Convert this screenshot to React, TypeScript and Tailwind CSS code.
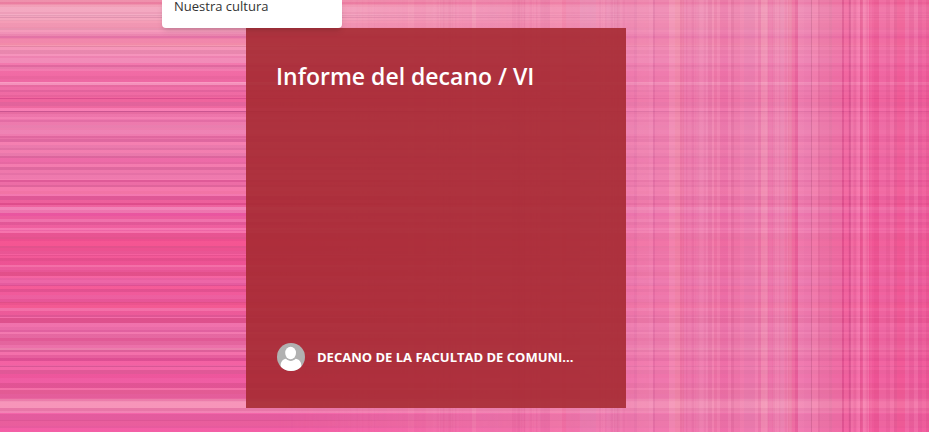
import React from 'react';

type Stripe = [number, string];

// Each stripe runs from its start to the start of the next one
const ROWS: Stripe[] = [
  [0, '#ee8ba8'], [2, '#e87096'], [4, '#ee8ca8'], [5, '#f3a4ba'], [7, '#f6b2c8'], [12, '#eda2bc'],
  [14, '#f8b8ce'], [15, '#e0a0b8'], [16, '#f6acc4'], [17, '#d890ac'], [18, '#f8b0c4'], [20, '#eca0b6'],
  [21, '#f8a2b8'], [23, '#f298b2'], [27, '#ee90ac'], [28, '#e694b0'], [30, '#f8a0c0'], [32, '#f292ba'],
  [34, '#ea80ae'], [36, '#dd64a0'], [38, '#ee76a4'], [39, '#f383a8'], [43, '#f48aa4'], [45, '#f9a0b4'],
  [46, '#de829e'], [47, '#fa9cbe'], [50, '#e688ae'], [54, '#fa9cc4'], [56, '#ee84b4'], [58, '#f494c0'],
  [63, '#f678b0'], [65, '#d8609a'], [67, '#e87aac'], [69, '#f67eb4'], [71, '#f368a4'], [76, '#e8629c'],
  [79, '#ee66a2'], [82, '#ffb4d2'], [83, '#f8a4c8'], [85, '#e4689e'], [87, '#f070a8'], [90, '#dd5c98'],
  [92, '#f068a2'], [95, '#e45c96'], [97, '#f4609c'], [98, '#d03c80'], [99, '#f05e98'], [102, '#dd5c96'],
  [106, '#ee649c'], [108, '#ff84ba'], [111, '#b84684'], [112, '#e4689e'], [114, '#ee76ac'], [117, '#f886b8'],
  [119, '#ee78ae'], [120, '#de6aa2'], [122, '#ee7eb0'], [125, '#e884b2'], [128, '#ee84b2'], [130, '#f08aba'],
  [134, '#f07eb2'], [136, '#da609a'], [138, '#e870a6'], [139, '#d8609a'], [142, '#fa84b4'], [145, '#ea7cae'],
  [148, '#de6ea2'], [150, '#f682b2'], [153, '#e87aac'], [156, '#d45c96'], [158, '#ee66a6'], [162, '#e4629e'],
  [164, '#f880b2'], [167, '#d8649a'], [170, '#f07cae'], [173, '#e272a6'], [175, '#f080b2'], [179, '#f888b8'],
  [180, '#d85090'], [182, '#ee6ca6'], [185, '#d86096'], [187, '#fa80b0'], [191, '#f57aa6'], [194, '#f880b6'],
  [196, '#d85090'], [200, '#ee5c98'], [203, '#d84080'], [205, '#f0629e'], [207, '#f694c4'], [210, '#ee80b6'],
  [213, '#e850a0'], [216, '#ec5c9e'], [219, '#f27ab2'], [222, '#dd5494'], [225, '#f060a0'], [228, '#fc86bc'],
  [230, '#ee6cac'], [231, '#fc80b6'], [233, '#e6508e'], [237, '#de5088'], [239, '#ee4a8a'], [241, '#fa5490'],
  [246, '#de5088'], [248, '#ec508e'], [251, '#e85694'], [254, '#fa66a4'], [255, '#e4508e'], [256, '#f65c9a'],
  [258, '#e04c8a'], [261, '#ee5294'], [265, '#f87cb2'], [267, '#ec60a0'], [270, '#e65696'], [272, '#de4c84'],
  [276, '#fa6ca8'], [278, '#ea64a6'], [280, '#ee6eb0'], [283, '#e25ea4'], [285, '#d84c90'], [286, '#fa5c98'],
  [289, '#de4c8c'], [292, '#f45a9c'], [295, '#ee62a4'], [299, '#e65296'], [302, '#dc487e'], [303, '#ee4e88'],
  [305, '#f8588e'], [308, '#f878ae'], [311, '#ee5898'], [315, '#d85090'], [317, '#fa72b0'], [318, '#d84884'],
  [323, '#f47ab4'], [327, '#ea70ac'], [330, '#dd60a0'], [332, '#f884b8'], [334, '#e46aa2'], [338, '#dd5490'],
  [341, '#e2649c'], [345, '#ee76ae'], [348, '#ee8cb4'], [350, '#d85c96'], [352, '#fa76b0'], [355, '#e65c9c'],
  [358, '#d8448c'], [361, '#fa60a4'], [365, '#f064a6'], [366, '#d05090'], [367, '#fa68aa'], [370, '#dd5292'],
  [374, '#f0509a'], [378, '#f45aa4'], [383, '#de4c8e'], [388, '#fa76ac'], [390, '#e0588e'], [394, '#e25c98'],
  [398, '#e868a0'], [399, '#ee8cb0'], [401, '#f8aac2'], [402, '#ffb2c8'], [408, '#e884ac'], [411, '#f896c0'],
  [413, '#fa6ab0'], [414, '#e25a9e'], [420, '#d85290'], [421, '#ea5e9c'], [426, '#e65a9e'], [428, '#fa60aa'],
];

const COLUMNS: Stripe[] = [
  [250, '#ee70a8'], [340, '#f27cac'], [408, '#f892b4'], [414, '#ee78a8'], [426, '#f288b0'], [440, '#e878a4'],
  [454, '#f07cac'], [472, '#f6a0bc'], [476, '#f082b0'], [490, '#e684b0'], [500, '#f07eaa'], [512, '#e66c9e'],
  [525, '#f27caa'], [540, '#e472a4'], [550, '#f68aae'], [562, '#f4749e'], [566, '#ee80ac'], [580, '#e692bc'],
  [596, '#f090b8'], [606, '#e88ab6'], [614, '#e080ac'], [620, '#ee84b2'], [634, '#e27cac'], [637, '#f08cb4'],
  [649, '#f494bc'], [653, '#d86ea2'], [655, '#ee84b2'], [669, '#f4a0bc'], [675, '#f29cac'], [680, '#e8769e'],
  [684, '#ea7cac'], [698, '#ee90b8'], [708, '#e27aa6'], [712, '#f494b8'], [714, '#e878a4'], [717, '#f28cb4'],
  [720, '#ea6ea6'], [728, '#f286b4'], [731, '#dc6a9c'], [734, '#ec7cac'], [740, '#f08ab4'], [744, '#e484b2'],
  [755, '#f294bc'], [758, '#e67aa8'], [761, '#f4a2bc'], [768, '#ea76aa'], [773, '#f090b8'], [780, '#e692b8'],
  [784, '#f090b6'], [788, '#e882a2'], [792, '#f06a9e'], [795, '#e0508e'], [798, '#f08aba'], [804, '#ea84b6'],
  [811, '#c0648e'], [812, '#f28ab4'], [818, '#dc709e'], [820, '#e87aaa'], [829, '#dc74a0'], [832, '#ec72a6'],
  [842, '#d04080'], [844, '#f464a0'], [849, '#c84080'], [851, '#f070a4'], [857, '#fa80b4'], [860, '#e2508c'],
  [863, '#f886b4'], [867, '#f878ac'], [869, '#ee5494'], [874, '#e84e8c'], [879, '#f06ca6'], [886, '#e6609a'],
  [890, '#f472a8'], [894, '#e0568e'], [897, '#f05692'], [905, '#f070a8'], [909, '#e65c98'], [914, '#f278ac'],
  [918, '#e65496'], [922, '#f0609c'], [926, '#e6508e'],
];

const Backdrop: React.FC = () => (
  <svg
    className="absolute inset-0 h-full w-full"
    viewBox="0 0 929 432"
    preserveAspectRatio="none"
    aria-hidden="true"
  >
    <defs>
      <linearGradient id="fade" x1="0" x2="1" y1="0" y2="0">
        <stop offset="0.3" stopColor="#fff" stopOpacity="0" />
        <stop offset="0.5" stopColor="#fff" stopOpacity="0.5" />
        <stop offset="0.7" stopColor="#fff" stopOpacity="0.85" />
        <stop offset="0.95" stopColor="#fff" stopOpacity="0.95" />
      </linearGradient>
      <linearGradient id="rows-tone" x1="0" x2="0" y1="0" y2="1">
        <stop offset="0" stopColor="#f09ab4" />
        <stop offset="0.1" stopColor="#ee8eb2" />
        <stop offset="0.18" stopColor="#ee6ca4" />
        <stop offset="0.35" stopColor="#ec78ac" />
        <stop offset="0.5" stopColor="#ec60a0" />
        <stop offset="0.6" stopColor="#ec5292" />
        <stop offset="0.8" stopColor="#e866a2" />
        <stop offset="1" stopColor="#e85c9e" />
      </linearGradient>
      <linearGradient id="columns-tone" x1="0" x2="1" y1="0" y2="0">
        <stop offset="0.4" stopColor="#f080ac" />
        <stop offset="0.68" stopColor="#ec84b2" />
        <stop offset="0.86" stopColor="#ec82ae" />
        <stop offset="0.94" stopColor="#ee5e9a" />
        <stop offset="1" stopColor="#ec5c9a" />
      </linearGradient>
      <mask id="columns-mask">
        <rect width="929" height="432" fill="url(#fade)" />
      </mask>
    </defs>
    {ROWS.map(([y, color], i) => (
      <rect key={y} y={y} width="929" height={(ROWS[i + 1]?.[0] ?? 432) - y} fill={color} />
    ))}
    <rect width="929" height="432" fill="url(#rows-tone)" opacity="0.35" />
    <g mask="url(#columns-mask)">
      {COLUMNS.map(([x, color], i) => (
        <rect key={x} x={x} width={(COLUMNS[i + 1]?.[0] ?? 929) - x} height="432" fill={color} />
      ))}
      {/* Fine threads over the wide columns */}
      {Array.from({ length: 90 }, (_, i) => (
        <rect
          key={i}
          x={350 + ((i * 83) % 579)}
          width={1 + (i % 2)}
          height="432"
          fill={i % 3 ? '#ffc4dc' : '#b83c78'}
          opacity="0.12"
        />
      ))}
      <rect width="929" height="432" fill="url(#columns-tone)" opacity="0.35" />
    </g>
    {/* The rows show through the columns as a faint weave */}
    <g mask="url(#columns-mask)" opacity="0.22">
      {ROWS.map(([y, color], i) => (
        <rect key={y} y={y} width="929" height={(ROWS[i + 1]?.[0] ?? 432) - y} fill={color} />
      ))}
    </g>
  </svg>
);

const Avatar: React.FC = () => (
  <svg className="size-[30px] shrink-0 p-px" viewBox="0 0 28 28" aria-hidden="true">
    <defs>
      <clipPath id="avatar-clip">
        <circle cx="14" cy="14" r="14" />
      </clipPath>
    </defs>
    <g clipPath="url(#avatar-clip)">
      <rect width="28" height="28" fill="#b1b1b1" />
      <path
        fill="#fff"
        d="M3.600 25.500V23c0-4.200 2.200-6.800 5.400-7.200 1.400 1.400 3 2.100 4.800 2.100s3.400-.7 4.800-2.100c3.400.4 5.800 3 5.800 7.200v2.500L21 28H7z"
      />
      <ellipse cx="13.600" cy="10.200" rx="6.100" ry="7" fill="#b1b1b1" />
      <ellipse cx="13.600" cy="10" rx="5.400" ry="6.200" fill="#fff" />
    </g>
  </svg>
);

const App: React.FC = () => {
  return (
    <div className="relative min-h-screen overflow-hidden bg-[#ee6ca6] font-['Open_Sans','Noto_Sans',sans-serif]">
      <Backdrop />

      {/* Open submenu hanging from the top bar */}
      <nav className="absolute top-0 left-[162px] z-10 w-[180px] rounded-b bg-white px-3 pb-4 shadow-md">
        <a href="#cultura" className="block text-[13px] leading-3 text-[#333]">
          Nuestra cultura
        </a>
      </nav>

      <main className="relative pt-7 pb-6 pl-[246px]">
        <article className="flex aspect-square w-full max-w-[380px] flex-col justify-between bg-[#a62a32]/90 px-[30px] pt-[30px] pb-9 text-white">
          <h2 className="text-[23px] leading-9 font-semibold">Informe del decano / VI</h2>
          <div className="flex items-center gap-[11px]">
            <Avatar />
            <span className="text-[13px] leading-5 font-bold whitespace-nowrap">
              DECANO DE LA FACULTAD DE COMUNI...
            </span>
          </div>
        </article>
      </main>
    </div>
  );
};

export default App;
